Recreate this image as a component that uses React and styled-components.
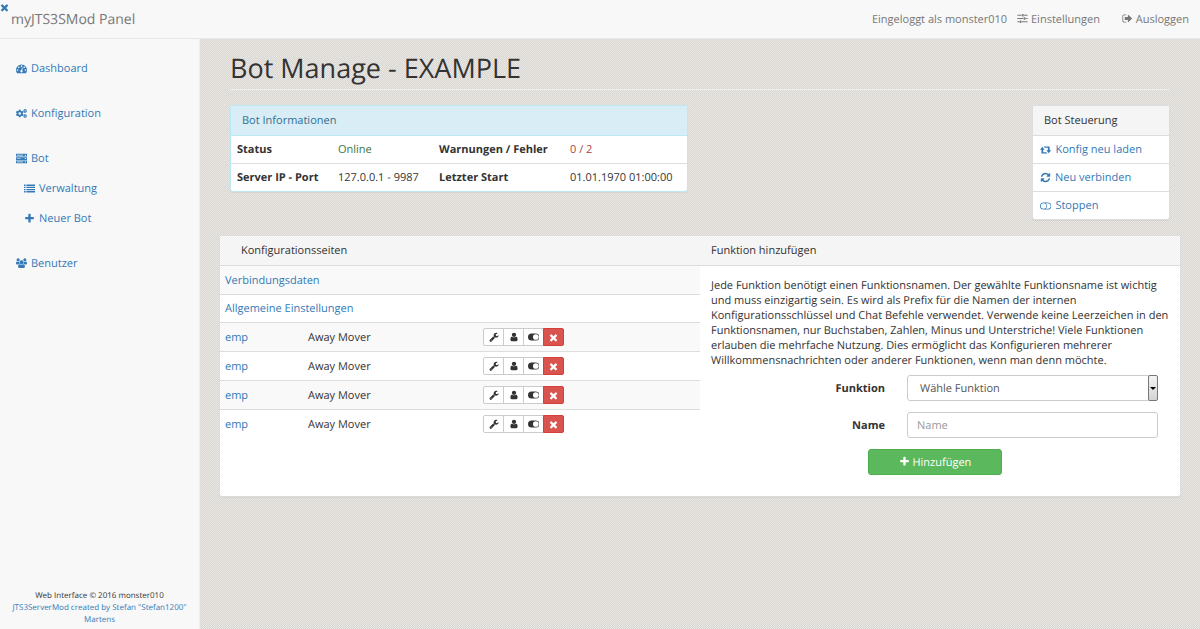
import React from "react";
import styled, { createGlobalStyle, css } from "styled-components";
import { FaCogs } from "react-icons/fa";

const GlobalStyle = createGlobalStyle`
  * {
    box-sizing: border-box;
  }

  body {
    margin: 0;
    background: repeating-conic-gradient(#d9d6d1 0 25%, #eae8e4 0 50%) 0 0 / 2px 2px;
    color: #333;
    font-family: "Open Sans", "Liberation Sans", sans-serif;
    font-size: 11px;
    line-height: 15px;
    text-rendering: geometricPrecision;
  }

  a {
    color: #337ab7;
    text-decoration: none;
  }

  button,
  input,
  select {
    font: inherit;
    text-rendering: inherit;
  }
`;

const Page = styled.div`
  display: flex;
  flex-direction: column;
  min-height: 100vh;
`;

const TopBar = styled.header`
  align-items: center;
  background-color: #f8f8f8;
  border-bottom: 1px solid #e7e7e7;
  display: flex;
  justify-content: space-between;
  height: 39px;
  padding: 0 11px;
`;

const MenuToggle = styled.button`
  background: none;
  border: 0;
  color: #337ab7;
  display: flex;
  left: -1px;
  padding: 0;
  position: absolute;
  top: 2px;
`;

const Brand = styled.a`
  color: #777;
  font-size: 14px;
`;

const UserNav = styled.nav`
  color: #777;
  display: flex;
  gap: 10px;

  a {
    color: #777;
  }

  a + a {
    margin-left: 12px;
  }
`;

const Glyph = styled.svg`
  fill: currentColor;
  height: ${(props) => props.$size}px;
  vertical-align: -1px;
  width: auto;
`;

const Body = styled.div`
  display: flex;
  flex: 1;
`;

const Sidebar = styled.aside`
  background-color: #f8f8f8;
  border-right: 1px solid #eee;
  display: flex;
  flex: 0 0 200px;
  flex-direction: column;
  justify-content: space-between;
`;

const SideNav = styled.nav`
  display: flex;
  flex-direction: column;
  gap: 15px;
  padding: 14px 16px;
`;

const SideLink = styled.a`
  align-items: center;
  display: flex;
  gap: 4px;
  height: 30px;
`;

const SideGroup = styled.div`
  display: flex;
  flex-direction: column;
`;

const SubLink = styled(SideLink)`
  margin-left: 8px;
`;

const IconSlot = styled.span`
  display: flex;
  flex: 0 0 11px;
  justify-content: center;
  width: 11px;
`;

const Credits = styled.footer`
  font-size: 8px;
  line-height: 12px;
  padding: 0 8px 3px;
  text-align: center;
`;

const Main = styled.main`
  flex: 1;
  padding: 0 19px;
`;

const PageTitle = styled.h1`
  border-bottom: 1px solid #eee;
  font-size: 27px;
  font-weight: 400;
  line-height: 32px;
  margin: 0 11px 15px;
  padding: 13px 0 5px;
`;

const TopPanels = styled.div`
  align-items: flex-start;
  display: flex;
  justify-content: space-between;
  margin: 0 11px 15px;
`;

const panelBox = css`
  background-color: #fff;
  border: 1px solid ${(props) => (props.$info ? "#bce8f1" : "#ddd")};
  border-radius: 3px;
  box-shadow: 0 1px 1px rgba(0, 0, 0, 0.05);
`;

const Panel = styled.section`
  ${panelBox}
  flex: 0 0 ${(props) => props.$width};
`;

const PanelHeading = styled.h2`
  background-color: ${(props) => (props.$info ? "#d9edf7" : "#f5f5f5")};
  border-bottom: 1px solid ${(props) => (props.$info ? "#bce8f1" : "#ddd")};
  color: ${(props) => (props.$info ? "#31708f" : "#333")};
  font-size: 11px;
  font-weight: 400;
  line-height: 15px;
  margin: 0;
  padding: 7px 11px;
`;

const InfoTable = styled.table`
  border-spacing: 0;
  table-layout: fixed;
  width: 100%;

  th,
  td {
    height: 27px;
    padding: 0 6px;
    text-align: left;
  }

  tr + tr > * {
    border-top: 1px solid #ddd;
    height: 28px;
  }
`;

const Value = styled.td`
  color: ${(props) => props.$color || "#333"};
`;

const ActionList = styled.ul`
  list-style: none;
  margin: 0;
  padding: 0;

  li {
    padding: 6px 7px;
  }

  li + li {
    border-top: 1px solid #ddd;
  }

  a {
    align-items: center;
    display: flex;
    gap: 4px;
  }
`;

const ConfigPanel = styled.section`
  ${panelBox}
  display: grid;
  grid-template-columns: 1fr 1fr;
`;

const ConfigHeading = styled(PanelHeading)`
  padding-left: ${(props) => props.$indent};
`;

const ConfigTable = styled.table`
  border-spacing: 0;
  table-layout: fixed;
  width: 100%;

  td {
    height: 29px;
    padding: 0 5px;
  }

  tr:nth-child(odd) {
    background-color: #f9f9f9;
  }

  tr + tr td {
    border-top: 1px solid #ddd;
  }
`;

const PageRow = styled.tr`
  && td {
    height: 28px;
  }
`;

const ButtonGroup = styled.div`
  display: flex;
`;

const ToolButton = styled.button`
  align-items: center;
  background-color: ${(props) => (props.$danger ? "#d9534f" : "#fff")};
  border: 1px solid ${(props) => (props.$danger ? "#d43f3a" : "#ccc")};
  color: ${(props) => (props.$danger ? "#fff" : "#333")};
  display: flex;
  height: 18px;
  justify-content: center;
  padding: 0;
  width: 21px;

  & + & {
    margin-left: -1px;
  }

  &:first-child {
    border-radius: 2px 0 0 2px;
  }

  &:last-child {
    border-radius: 0 2px 2px 0;
  }
`;

const FormBody = styled.form`
  padding: 12px 22px 21px 11px;
`;

const Help = styled.p`
  margin: 0 -11px 7px 0;
`;

const Field = styled.div`
  align-items: center;
  display: grid;
  gap: 22px;
  grid-template-columns: 174px 1fr;
  margin-bottom: 11px;

  label {
    font-weight: 700;
    text-align: right;
  }
`;

const control = css`
  background-color: #fff;
  border: 1px solid #ccc;
  border-radius: 3px;
  color: #555;
  height: 26px;
  width: 100%;
`;

const TextInput = styled.input`
  ${control}
  padding: 0 9px;

  &::placeholder {
    color: #999;
  }
`;

const SelectWrap = styled.div`
  position: relative;
`;

const Select = styled.select`
  ${control}
  appearance: none;
  display: block;
  padding: 0 12px;
`;

const SelectArrow = styled.span`
  align-items: center;
  background: linear-gradient(#f4f4f4, #d4d4d4);
  border: 1px solid #777;
  border-radius: 2px;
  bottom: 0;
  display: flex;
  justify-content: center;
  pointer-events: none;
  position: absolute;
  right: 0;
  top: 0;
  width: 10px;
`;

const SubmitButton = styled.button`
  background-color: #5cb85c;
  border: 1px solid #4cae4c;
  border-radius: 3px;
  color: #fff;
  display: block;
  height: 26px;
  margin-left: 157px;
  padding: 0;
  width: 134px;
`;

const shapes = {
  plus: "M1600 736v192q0 40-28 68t-68 28h-416v416q0 40-28 68t-68 28h-192q-40 0-68-28t-28-68v-416h-416q-40 0-68-28t-28-68v-192q0-40 28-68t68-28h416v-416q0-40 28-68t68-28h192q40 0 68 28t28 68v416h416q40 0 68 28t28 68z",
  times:
    "M1490 1322q0 40-28 68l-136 136q-28 28-68 28t-68-28l-294-294-294 294q-28 28-68 28t-68-28l-136-136q-28-28-28-68t28-68l294-294-294-294q-28-28-28-68t28-68l136-136q28-28 68-28t68 28l294 294 294-294q28-28 68-28t68 28l136 136q28 28 28 68t-28 68l-294 294 294 294q28 28 28 68z",
  user: "M1536 1399q0 109-62.5 187t-150.5 78h-854q-88 0-150.5-78t-62.5-187q0-85 8.5-160.5t31.5-152 58.5-131 94-89 134.5-34.5q131 128 313 128t313-128q76 0 134.5 34.5t94 89 58.5 131 31.5 152 8.5 160.5zm-256-887q0 159-112.5 271.5t-271.5 112.5-271.5-112.5-112.5-271.5 112.5-271.5 271.5-112.5 271.5 112.5 112.5 271.5z",
  wrench:
    "M448 1472q0-26-19-45t-45-19-45 19-19 45 19 45 45 19 45-19 19-45zm644-420l-682 682q-37 37-90 37-52 0-91-37l-106-108q-38-36-38-90 0-53 38-91l681-681q39 98 114.5 173.5t173.5 114.5zm634-435q0 39-23 106-47 134-164.5 217.5t-258.5 83.5q-185 0-316.5-131.5t-131.5-316.5 131.5-316.5 316.5-131.5q58 0 121.5 16.5t107.5 46.5q16 11 16 28t-16 28l-293 169v224l193 107q5-3 79-48.5t135.5-81 70.5-35.5q15 0 23.5 10t8.5 25z",
  dashboard:
    "M384 1152q0-53-37.5-90.5t-90.5-37.5-90.5 37.5-37.5 90.5 37.5 90.5 90.5 37.5 90.5-37.5 37.5-90.5zm192-448q0-53-37.5-90.5t-90.5-37.5-90.5 37.5-37.5 90.5 37.5 90.5 90.5 37.5 90.5-37.5 37.5-90.5zm428 481l101-382q6-26-7.5-48.5t-38.5-29.5-48 6.5-30 39.5l-101 382q-60 5-107 43.5t-63 98.5q-20 77 20 146t117 89 146-20 89-117q16-60-6-117t-72-91zm660-33q0-53-37.5-90.5t-90.5-37.5-90.5 37.5-37.5 90.5 37.5 90.5 90.5 37.5 90.5-37.5 37.5-90.5zm-640-640q0-53-37.5-90.5t-90.5-37.5-90.5 37.5-37.5 90.5 37.5 90.5 90.5 37.5 90.5-37.5 37.5-90.5zm448 192q0-53-37.5-90.5t-90.5-37.5-90.5 37.5-37.5 90.5 37.5 90.5 90.5 37.5 90.5-37.5 37.5-90.5zm320 448q0 261-141 483-19 29-54 29h-1402q-35 0-54-29-141-221-141-483 0-182 71-348t191-286 286-191 348-71 348 71 286 191 191 286 71 348z",
  signOut:
    "M704 1440q0 4 1 20t.5 26.5-3 23.5-10 19.5-20.5 6.5h-320q-119 0-203.5-84.5t-84.5-203.5v-704q0-119 84.5-203.5t203.5-84.5h320q13 0 22.5 9.5t9.5 22.5q0 4 1 20t.5 26.5-3 23.5-10 19.5-20.5 6.5h-320q-66 0-113 47t-47 113v704q0 66 47 113t113 47h312l11.5 1 11.5 3 8 5.5 7 9 2 13.5zm928-544q0 26-19 45l-544 544q-19 19-45 19t-45-19-19-45v-288h-448q-26 0-45-19t-19-45v-384q0-26 19-45t45-19h448v-288q0-26 19-45t45-19 45 19l544 544q19 19 19 45z",
  refresh:
    "M1639 1056q0 5-1 7-64 268-268 434.5t-478 166.5q-146 0-282.5-55t-243.5-157l-129 129q-19 19-45 19t-45-19-19-45v-448q0-26 19-45t45-19h448q26 0 45 19t19 45-19 45l-137 137q71 66 161 102t187 36q134 0 250-65t186-179q11-17 53-117 8-23 30-23h192q13 0 22.5 9.5t9.5 22.5zm25-800v448q0 26-19 45t-45 19h-448q-26 0-45-19t-19-45 19-45l138-138q-148-137-349-137-134 0-250 65t-186 179q-11 17-53 117-8 23-30 23h-199q-13 0-22.5-9.5t-9.5-22.5v-7q65-268 270-434.5t480-166.5q146 0 284 55.5t245 156.5l130-129q19-19 45-19t45 19 19 45z",
  list: "M0 256h256v224H0zM384 256h1408v224H384zM0 608h256v224H0zM384 608h1408v224H384zM0 960h256v224H0zM384 960h1408v224H384zM0 1312h256v224H0zM384 1312h1408v224H384z",
  server:
    "M0 128h1792v448H0zM128 304v96h1024V304zM1440 272v160h192V272zM0 672h1792v448H0zM128 848v96h640V848zM1440 816v160h192V816zM0 1216h1792v448H0zM128 1392v96h1024v-96zM1440 1360v160h192v-160z",
  sliders:
    "M64 288h704v160H64zM832 160h256v416H832zM1152 288h576v160h-576zM64 816h960v160H64zM1088 688h256v416h-256zM1408 816h320v160h-320zM64 1344h320v160H64zM448 1216h256v416H448zM768 1344h960v160H768z",
  retweet:
    "M416 320 0 832h256v640q0 64 64 64h1024l-208-256H576V832h256zM640 256l208 256h560v448h-256l416 512 416-512h-256V320q0-64-64-64z",
  toggleOff:
    "M640 256h768a640 640 0 0 1 0 1280H640a640 640 0 0 1 0-1280zm0 144a496 496 0 0 0 0 992a496 496 0 0 0 0-992zm384 0a640 640 0 0 1 0 992h384a496 496 0 0 0 0-992z",
  toggleOn:
    "M640 256h768a640 640 0 0 1 0 1280H640a640 640 0 0 1 0-1280zm768 128a512 512 0 0 0 0 1024a512 512 0 0 0 0-1024z",
  users:
    "M896 448a320 320 0 1 1 0 640a320 320 0 0 1 0-640zM352 128a256 256 0 1 1 0 512a256 256 0 0 1 0-512zM1440 128a256 256 0 1 1 0 512a256 256 0 0 1 0-512zM128 640q208 144 400 64q-16 192 80 320q-176 0-256 96H160q-160 0-160-160q0-320 128-320zM1664 640q-208 144-400 64q16 192-80 320q176 0 256 96h192q160 0 160-160q0-320-128-320zM592 1088q304 160 608 0q256 0 256 400q0 240-224 240H560q-224 0-224-240q0-400 256-400z",
};

// these are wider than the square the rest are drawn in
const wideShapes = ["retweet", "toggleOff", "toggleOn"];

function Icon({ name, size = 11 }) {
  const width = wideShapes.includes(name) ? 2048 : 1792;

  return (
    <Glyph viewBox={`0 0 ${width} 1792`} fillRule="evenodd" $size={size} aria-hidden>
      <path d={shapes[name]} />
    </Glyph>
  );
}

const functions = [1, 2, 3, 4].map((id) => ({
  id,
  name: "emp",
  type: "Away Mover",
}));

function SideItem({ as: Item = SideLink, icon, children }) {
  return (
    <Item href="#">
      <IconSlot>{icon}</IconSlot>
      {children}
    </Item>
  );
}

function BotInfo() {
  return (
    <Panel $info $width="458px">
      <PanelHeading $info>Bot Informationen</PanelHeading>
      <InfoTable>
        <colgroup>
          <col width="101" />
          <col width="101" />
          <col width="131" />
          <col />
        </colgroup>
        <tbody>
          <tr>
            <th scope="row">Status</th>
            <Value $color="#3c763d">Online</Value>
            <th scope="row">Warnungen / Fehler</th>
            <Value $color="#a94442">0 / 2</Value>
          </tr>
          <tr>
            <th scope="row">Server IP - Port</th>
            <Value>127.0.0.1 - 9987</Value>
            <th scope="row">Letzter Start</th>
            <Value>01.01.1970 01:00:00</Value>
          </tr>
        </tbody>
      </InfoTable>
    </Panel>
  );
}

function BotControl() {
  return (
    <Panel $width="138px">
      <PanelHeading>Bot Steuerung</PanelHeading>
      <ActionList>
        <li>
          <a href="#"><Icon name="retweet" size={10} /> Konfig neu laden</a>
        </li>
        <li>
          <a href="#"><Icon name="refresh" /> Neu verbinden</a>
        </li>
        <li>
          <a href="#"><Icon name="toggleOff" size={10} /> Stoppen</a>
        </li>
      </ActionList>
    </Panel>
  );
}

function ConfigPages() {
  return (
    <div>
      <ConfigHeading $indent="21px">Konfigurationsseiten</ConfigHeading>
      <ConfigTable>
        <colgroup>
          <col width="83" />
          <col width="175" />
          <col />
        </colgroup>
        <tbody>
          <PageRow>
            <td colSpan={3}><a href="#">Verbindungsdaten</a></td>
          </PageRow>
          <PageRow>
            <td colSpan={3}><a href="#">Allgemeine Einstellungen</a></td>
          </PageRow>
          {functions.map((item) => (
            <tr key={item.id}>
              <td><a href="#">{item.name}</a></td>
              <td>{item.type}</td>
              <td>
                <ButtonGroup>
                  <ToolButton aria-label="Bearbeiten"><Icon name="wrench" size={10} /></ToolButton>
                  <ToolButton aria-label="Benutzer"><Icon name="user" size={10} /></ToolButton>
                  <ToolButton aria-label="Umschalten"><Icon name="toggleOn" size={10} /></ToolButton>
                  <ToolButton $danger aria-label="Entfernen"><Icon name="times" /></ToolButton>
                </ButtonGroup>
              </td>
            </tr>
          ))}
        </tbody>
      </ConfigTable>
    </div>
  );
}

function AddFunction() {
  return (
    <div>
      <ConfigHeading $indent="11px">Funktion hinzufügen</ConfigHeading>
      <FormBody onSubmit={(e) => e.preventDefault()}>
        <Help>
          Jede Funktion benötigt einen Funktionsnamen. Der gewählte Funktionsname ist wichtig und
          muss einzigartig sein. Es wird als Prefix für die Namen der internen
          Konfigurationsschlüssel und Chat Befehle verwendet. Verwende keine Leerzeichen in den
          Funktionsnamen, nur Buchstaben, Zahlen, Minus und Unterstriche! Viele Funktionen erlauben
          die mehrfache Nutzung. Dies ermöglicht das Konfigurieren mehrerer
          Willkommensnachrichten oder anderer Funktionen, wenn man denn möchte.
        </Help>
        <Field>
          <label htmlFor="funktion">Funktion</label>
          <SelectWrap>
            <Select id="funktion">
              <option>Wähle Funktion</option>
            </Select>
            <SelectArrow>
              <svg width="6" height="3" viewBox="0 0 6 3"><path d="M0 0h6L3 3z" /></svg>
            </SelectArrow>
          </SelectWrap>
        </Field>
        <Field>
          <label htmlFor="name">Name</label>
          <TextInput id="name" placeholder="Name" />
        </Field>
        <SubmitButton type="submit">
          <Icon name="plus" /> Hinzufügen
        </SubmitButton>
      </FormBody>
    </div>
  );
}

export default function App() {
  return (
    <Page>
      <GlobalStyle />
      <MenuToggle aria-label="Menü"><Icon name="times" /></MenuToggle>
      <TopBar>
        <Brand href="#">myJTS3SMod Panel</Brand>
        <UserNav>
          <span>Eingeloggt als monster010</span>
          <a href="#"><Icon name="sliders" /> Einstellungen</a>
          <a href="#"><Icon name="signOut" /> Ausloggen</a>
        </UserNav>
      </TopBar>
      <Body>
        <Sidebar>
          <SideNav>
            <SideItem icon={<Icon name="dashboard" />}>Dashboard</SideItem>
            <SideItem icon={<FaCogs size={13} />}>Konfiguration</SideItem>
            <SideGroup>
              <SideItem icon={<Icon name="server" />}>Bot</SideItem>
              <SideItem as={SubLink} icon={<Icon name="list" />}>Verwaltung</SideItem>
              <SideItem as={SubLink} icon={<Icon name="plus" />}>Neuer Bot</SideItem>
            </SideGroup>
            <SideItem icon={<Icon name="users" size={12} />}>Benutzer</SideItem>
          </SideNav>
          <Credits>
            Web Interface © 2016 monster010
            <br />
            <a href="#">JTS3ServerMod created by Stefan "Stefan1200" Martens</a>
          </Credits>
        </Sidebar>
        <Main>
          <PageTitle>Bot Manage - EXAMPLE</PageTitle>
          <TopPanels>
            <BotInfo />
            <BotControl />
          </TopPanels>
          <ConfigPanel>
            <ConfigPages />
            <AddFunction />
          </ConfigPanel>
        </Main>
      </Body>
    </Page>
  );
}
